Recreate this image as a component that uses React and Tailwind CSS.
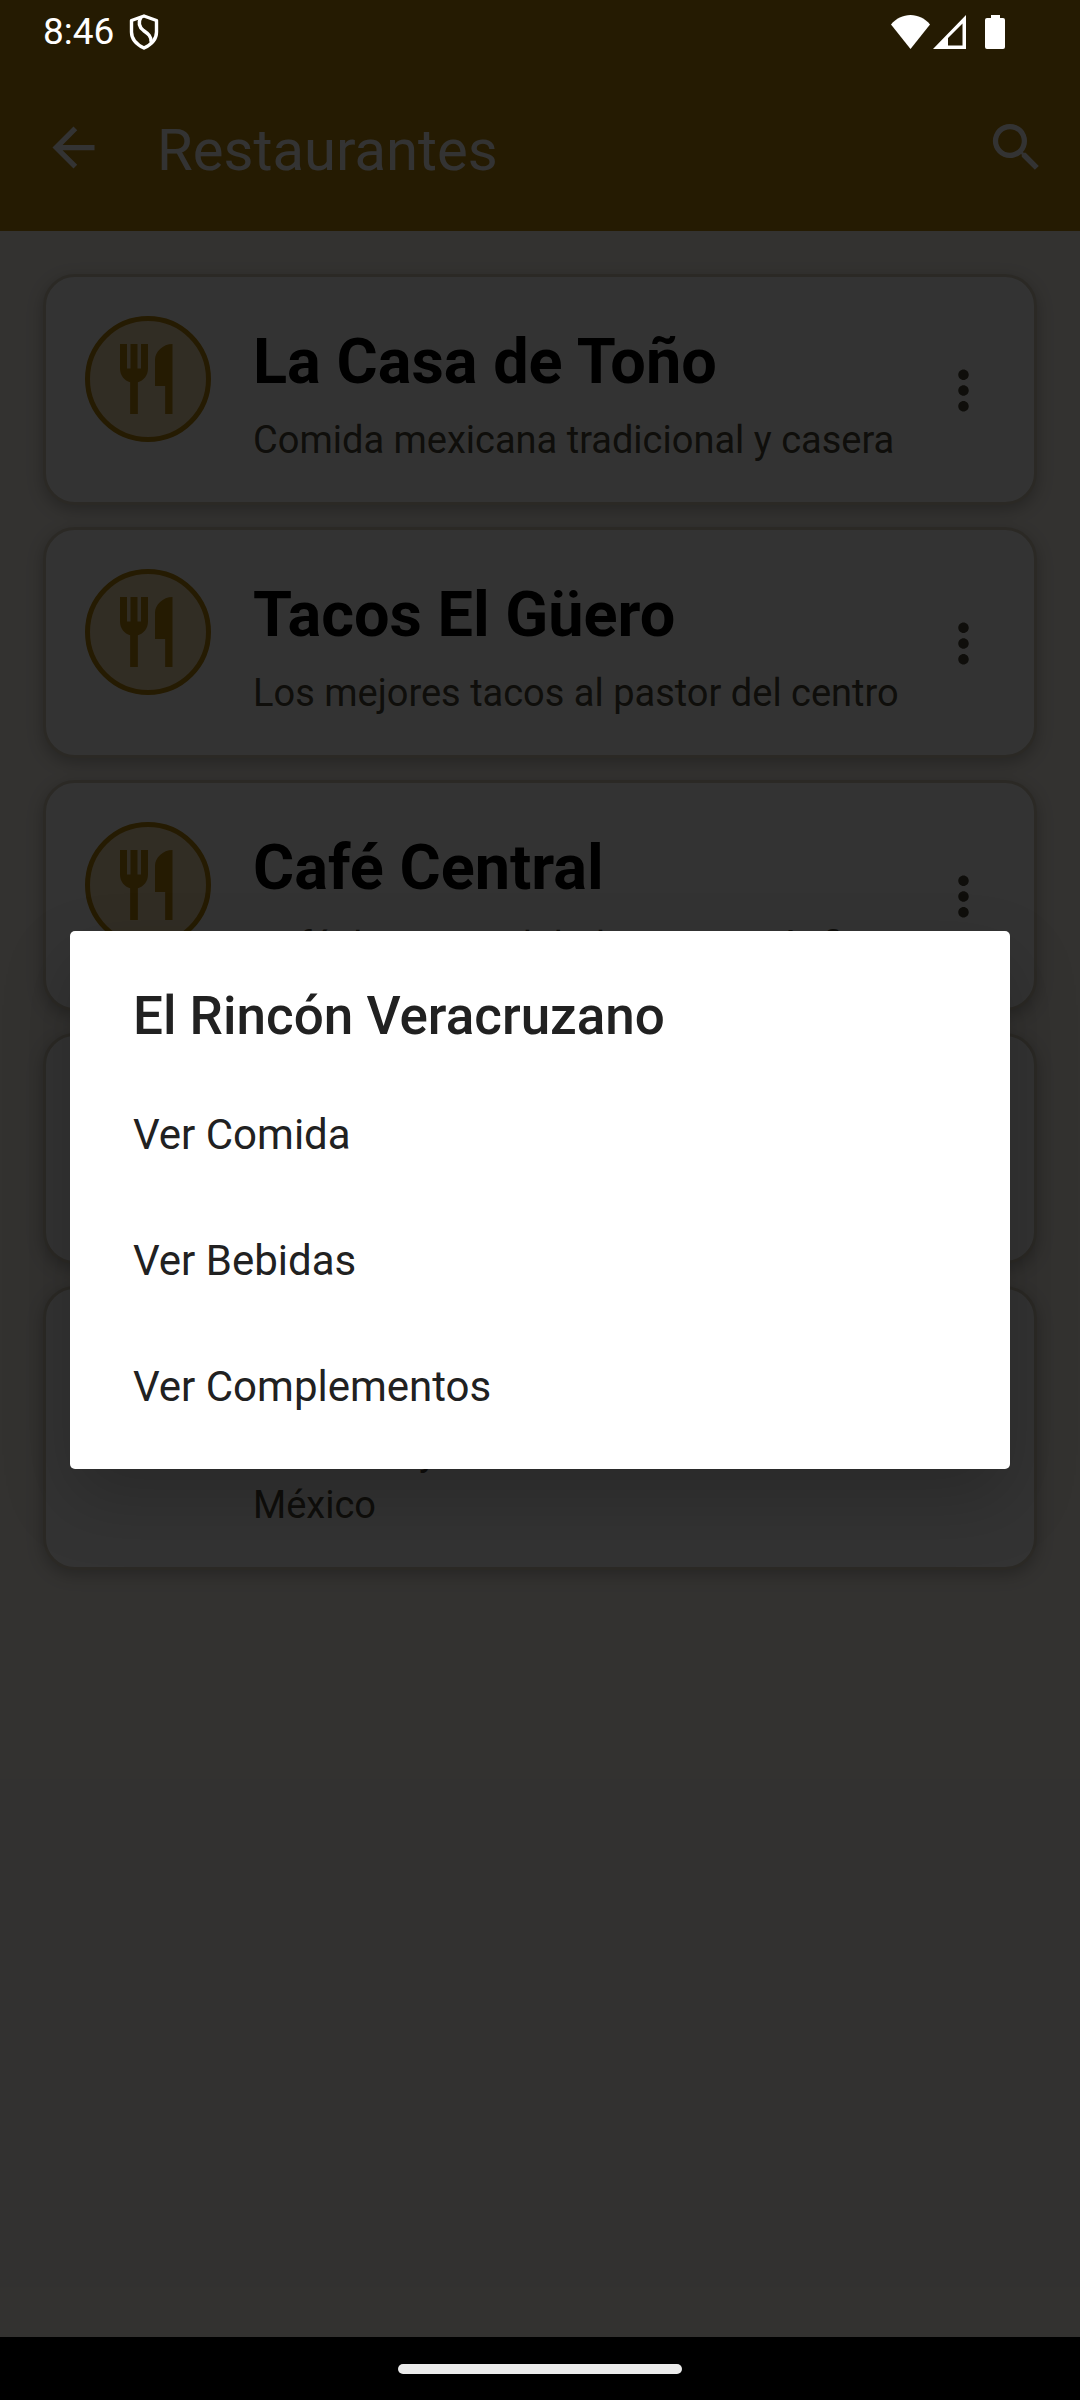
import { MdArrowBack, MdSearch, MdMoreVert } from "react-icons/md";

const restaurants = [
  { name: "La Casa de Toño", description: "Comida mexicana tradicional y casera" },
  { name: "Tacos El Güero", description: "Los mejores tacos al pastor del centro" },
  { name: "Café Central", description: "Café de especialidad y repostería fina" },
  { name: "El Rincón Veracruzano", description: "Mariscos frescos estilo Veracruz" },
  { name: "Antojitos", description: "Tradición y sabor en el corazón de México" },
];

const options = ["Ver Comida", "Ver Bebidas", "Ver Complementos"];

function ShieldIcon() {
  return (
    <svg viewBox="0 0 30 36" className="h-9 w-[30px]" fill="none" stroke="currentColor" strokeWidth="3.4" strokeLinejoin="round" aria-hidden="true">
      <path d="M15 2 27.500 6.500v11.500c0 7-5 12.500-12.500 16C7.500 30.500 2.500 25 2.500 18V6.500z" />
      <path d="M12 3C9 8.500 10 13 14.500 16.500c5 3.500 8 6 7.500 11.500" />
    </svg>
  );
}

function WifiIcon() {
  return (
    <svg viewBox="0 0 39 34" className="h-[34px] w-[39px]" fill="currentColor" aria-hidden="true">
      <path d="M0 9.500C5 3.500 12 0 19.500 0S34 3.500 39 9.500L19.500 34z" />
    </svg>
  );
}

function SignalIcon() {
  return (
    <svg viewBox="0 0 33 34" className="h-[34px] w-[33px]" fill="currentColor" fillRule="evenodd" aria-hidden="true">
      <path d="M33 0v34H0zM29.500 8.500 15 23v7.500h14.500z" />
    </svg>
  );
}

function BatteryIcon() {
  return (
    <svg viewBox="0 0 20 34" className="h-[34px] w-5" fill="currentColor" aria-hidden="true">
      <path d="M6 0h9v3h3a2 2 0 0 1 2 2v27a2 2 0 0 1-2 2H2a2 2 0 0 1-2-2V5a2 2 0 0 1 2-2h4z" />
    </svg>
  );
}

function CutleryIcon() {
  return (
    <svg viewBox="0 0 24 24" className="size-[84px]" fill="currentColor" aria-hidden="true">
      <path d="M4 2h2v7h1V2h2v7h1V2h2v7c0 2-1.300 3.500-2.900 3.900V22H6.900v-9.100C5.300 12.500 4 11 4 9z" />
      <path d="M19 2c-2.760 0-5 2.240-5 4.500V14h2.900v8H19z" />
    </svg>
  );
}

function StatusBar() {
  return (
    <div className="absolute inset-x-0 top-0 z-20 flex h-[63px] items-center justify-between pr-[75px] pl-[43px] text-white">
      <div className="flex items-center gap-[15px]">
        <span className="text-[37px] leading-[44px]">8:46</span>
        <ShieldIcon />
      </div>
      <div className="flex items-center">
        <WifiIcon />
        <span className="ml-[3px] flex"><SignalIcon /></span>
        <span className="ml-[19px] flex"><BatteryIcon /></span>
      </div>
    </div>
  );
}

function RestaurantCard({ name, description }) {
  return (
    <li className="flex items-start rounded-[32px] border-[3px] border-[#d4cdb9] bg-white px-[39px] pt-[39px] pb-[35px] shadow-[0_5px_16px_rgba(0,0,0,0.25)]">
      <span className="flex size-[126px] shrink-0 items-center justify-center rounded-full border-[5px] border-[#b8860b] bg-[#f5deb3] text-[#b8860b]">
        <CutleryIcon />
      </span>
      <div className="ml-[42px] min-w-0 flex-1 pt-2">
        <h2 className="text-[63px] leading-[76px] font-bold text-black">{name}</h2>
        <p className="mt-[14px] text-[38px] leading-[53px] text-[#4b4837]">{description}</p>
      </div>
      <button type="button" aria-label={"Opciones de " + name} className="flex h-[148px] w-[63px] shrink-0 items-center justify-center text-[#4b4837]">
        <MdMoreVert className="size-[63px]" />
      </button>
    </li>
  );
}

function OptionsDialog() {
  return (
    <div className="absolute inset-0 z-10 flex items-center justify-center bg-black/80 px-[70px]">
      <div role="dialog" aria-modal="true" aria-labelledby="dialog-title" className="w-full rounded-[5px] bg-white pb-5 text-[#212121] shadow-[0_30px_70px_rgba(0,0,0,0.2)]">
        <h2 id="dialog-title" className="px-[63px] pt-[53px] pb-[23px] text-[53px] leading-[64px] font-medium">
          El Rincón Veracruzano
        </h2>
        {options.map((option) => (
          <button key={option} type="button" className="block h-[126px] w-full px-[63px] text-left text-[42px]">
            {option}
          </button>
        ))}
      </div>
    </div>
  );
}

export default function App() {
  return (
    <div className="relative flex min-h-screen flex-col bg-[#fcf7ee] font-[Roboto,sans-serif]">
      <StatusBar />
      <header className="flex h-[231px] items-center bg-[#b8860b] pt-[63px] pr-8 pl-[42px] text-white">
        <button type="button" aria-label="Atrás" className="flex">
          <MdArrowBack className="size-[63px]" />
        </button>
        <h1 className="ml-[52px] flex-1 pt-[6px] text-[58px] leading-[68px]">Restaurantes</h1>
        <button type="button" aria-label="Buscar" className="flex">
          <MdSearch className="size-[63px]" />
        </button>
      </header>
      <main className="flex-1 px-[43px] pt-[43px]">
        <ul className="flex flex-col gap-[22px]">
          {restaurants.map((restaurant) => (
            <RestaurantCard key={restaurant.name} {...restaurant} />
          ))}
        </ul>
      </main>
      <OptionsDialog />
      <nav aria-label="Sistema" className="relative z-20 flex h-[63px] justify-center bg-black pt-[27px]">
        <button type="button" aria-label="Inicio" className="h-[10px] w-[284px] rounded-full bg-[#ebebeb]" />
      </nav>
    </div>
  );
}
